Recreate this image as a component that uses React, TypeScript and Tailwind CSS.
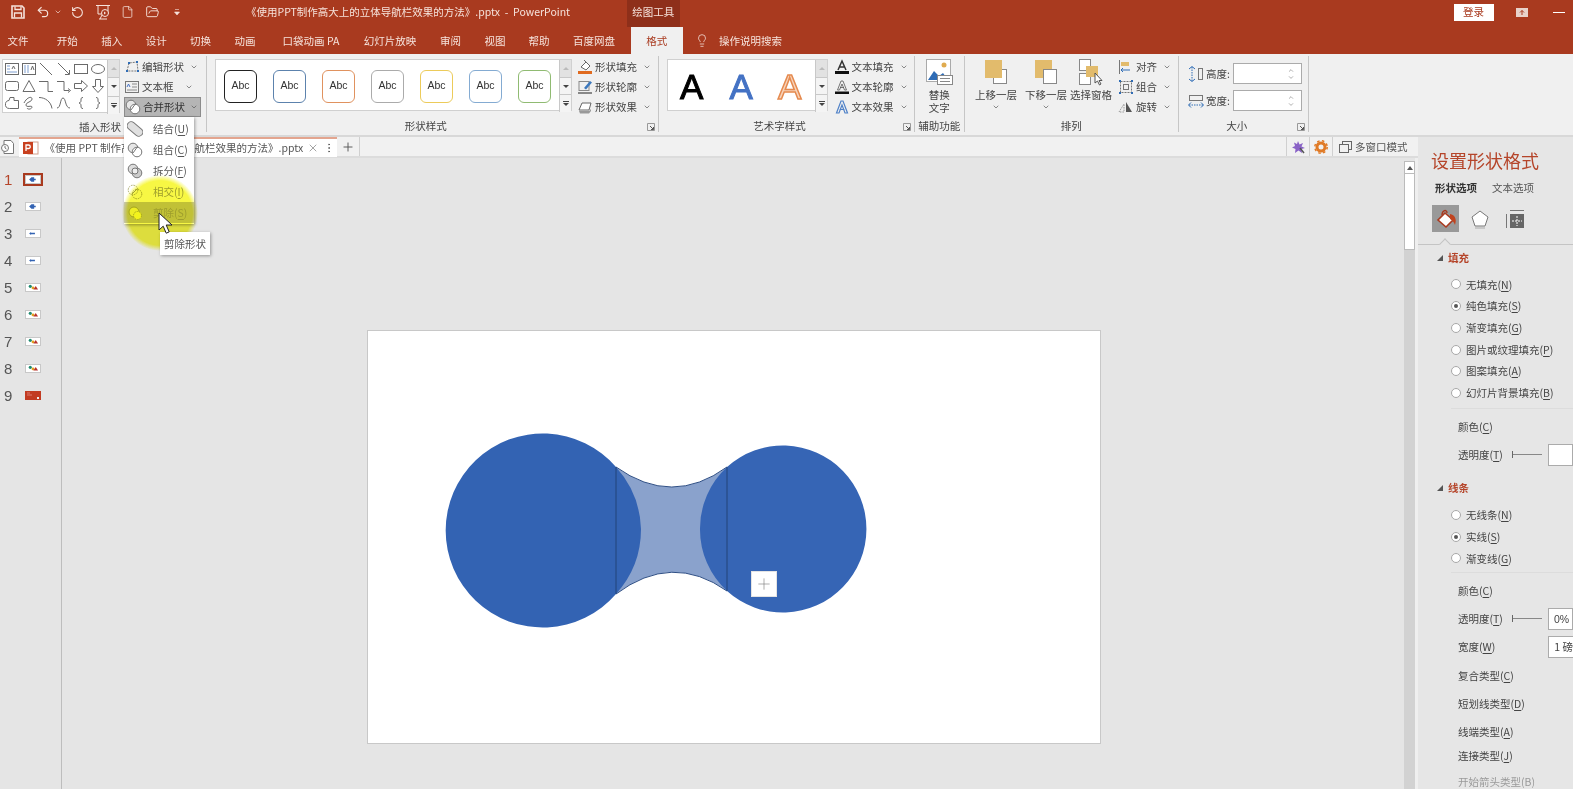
import { ReactNode } from "react";
import { ChevronDown, ChevronUp, FolderOpen, Lightbulb, MoreVertical, Plus, RotateCcw, Undo2, X, File } from "lucide-react";

const font = "font-['Noto_Sans_CJK_SC','Noto_Sans',sans-serif]";

// small chevron used next to ribbon buttons
function Chev({ className = "" }: { className?: string }) {
  return <ChevronDown className={`w-[8px] h-[8px] text-[#555] shrink-0 ${className}`} strokeWidth={2} />;
}

function Acc({ label, k }: { label: string; k: string }) {
  return (
    <span>
      {label}(<span className="underline underline-offset-2">{k}</span>)
    </span>
  );
}

function Svg({ children, w = 16, h = 16, className = "" }: { children: ReactNode; w?: number; h?: number; className?: string }) {
  return (
    <svg width={w} height={h} viewBox={`0 0 ${w} ${h}`} fill="none" className={`shrink-0 ${className}`}>
      {children}
    </svg>
  );
}

const gal = "#6a6a6a";
const galleryIcons: ReactNode[] = [
  <><rect x="1.5" y="2.5" width="13" height="11" stroke={gal} /><path d="M3 5h3M3 8h3M3 11h10" stroke="#7f9fd0" /><path d="M8 8l1.500-3 1.500 3" stroke={gal} /></>,
  <><rect x="1.5" y="2.5" width="13" height="11" stroke={gal} /><path d="M4 4v8M7 4v8" stroke="#7f9fd0" /><path d="M10 9l1.500-4 1.500 4" stroke={gal} /></>,
  <path d="M2 2l12 12" stroke={gal} />,
  <><path d="M2 2l11 11" stroke={gal} /><path d="M13.5 9v4.5H9" stroke={gal} /></>,
  <rect x="1.5" y="3.5" width="13" height="9" stroke={gal} />,
  <ellipse cx="8" cy="8" rx="6.5" ry="4.5" stroke={gal} />,
  <rect x="1.5" y="3.5" width="13" height="9" rx="2" stroke={gal} />,
  <path d="M8 2.5l6 11H2z" stroke={gal} />,
  <path d="M1 13.5h5v-10h9" stroke={gal} transform="matrix(-1 0 0 1 16 0)" />,
  <><path d="M1 3.5h7v9h5" stroke={gal} /><path d="M12 10.5l2.5 2-2.500 2" stroke={gal} /></>,
  <path d="M1.5 5.5h7v-3l6 5.5-6 5.500v-3h-7z" stroke={gal} />,
  <path d="M5.5 1.5v7h-3l5.5 6 5.500-6h-3v-7z" stroke={gal} />,
  <path d="M6 2.5h4v3h4.500v8h-9c-3 0-4.500-2-4-5 .3-2 2-3 3.500-3z" stroke={gal} />,
  <path d="M3 8c3-6 8-7 8-4s-6 3-6 6 6 0 6 2-4 3-5 1" stroke={gal} />,
  <path d="M1 2.500c6 0 12 4 13 11" stroke={gal} />,
  <path d="M1 13c4 0 3-10 6-10s2 10 7 10" stroke={gal} />,
  <path d="M10 2.500c-2 0-2 1-2 2.500s0 2.500-2 3c2 .5 2 1.500 2 3s0 2.500 2 2.500" stroke={gal} />,
  <path d="M6 2.500c2 0 2 1 2 2.500s0 2.500 2 3c-2 .5-2 1.500-2 3s0 2.500-2 2.500" stroke={gal} />,
];

function ScrollCol({ h }: { h: "a" | "b" }) {
  return (
    <div className={`w-[12px] shrink-0 flex flex-col border-l border-[#c8c8c8] bg-[#f4f4f4] ${h === "a" ? "h-[54px]" : "h-[52px]"}`}>
      <div className="flex-1 flex items-center justify-center bg-[#e2e2e2]">
        <span className="w-0 h-0 border-x-[3px] border-x-transparent border-b-[3px] border-b-[#bbb]" />
      </div>
      <div className="flex-1 flex items-center justify-center border-y border-[#c8c8c8]">
        <span className="w-0 h-0 border-x-[3px] border-x-transparent border-t-[3px] border-t-[#444]" />
      </div>
      <div className="flex-1 flex flex-col items-center justify-center gap-[1px]">
        <span className="w-[6px] h-px bg-[#444]" />
        <span className="w-0 h-0 border-x-[3px] border-x-transparent border-t-[3px] border-t-[#444]" />
      </div>
    </div>
  );
}

function Launcher() {
  return (
    <svg width="8" height="8" viewBox="0 0 8 8" fill="none" className="absolute right-[3px] bottom-[1px]">
      <path d="M.5 7.500v-7h7v7z" stroke="#999" />
      <path d="M3 3l3.500 3.500M6.500 4v2.500H4" stroke="#555" />
    </svg>
  );
}

function Group({ w, label, children, launcher }: { w: string; label: string; children: ReactNode; launcher?: boolean }) {
  return (
    <div className={`${w} shrink-0 h-[76px] flex flex-col border-r border-[#c6c6c6]`}>
      <div className="h-[63px] flex">{children}</div>
      <div className={`relative h-[13px] pt-[1px] flex items-center justify-center text-[10.5px] leading-none text-[#444] ${launcher ? "pr-[13px]" : ""}`}>
        {label}
        {launcher && <Launcher />}
      </div>
    </div>
  );
}

function ListBtn({ icon, label, chevGap = "ml-[4px]" }: { icon: ReactNode; label: string; chevGap?: string }) {
  return (
    <div className="h-[20px] flex items-center gap-[2px] text-[10.5px] text-[#444] whitespace-nowrap">
      {icon}
      <span>{label}</span>
      <Chev className={chevGap} />
    </div>
  );
}

function TwoCircles({ mode }: { mode: "union" | "combine" | "frag" | "inter" | "sub" }) {
  const c = mode === "inter" || mode === "sub" ? "#a8a86a" : "#777";
  return (
    <Svg w={16} h={16}>
      {mode === "union" && <rect x="-1" y="4" width="18" height="8" rx="4" transform="rotate(40 8 8)" fill="#e0e0e0" stroke={c} />}
      {mode === "combine" && <><circle cx="6" cy="6" r="4.800" fill="#e6e6e6" stroke={c} /><circle cx="10" cy="10" r="4.800" fill="#fff" stroke={c} /><path d="M6 11l5-7" stroke={c} /></>}
      {mode === "frag" && <><circle cx="6" cy="6" r="4.800" fill="#ddd" stroke={c} /><circle cx="10" cy="10" r="4.800" fill="#ccc" stroke={c} /><circle cx="8" cy="8" r="3" fill="#eee" stroke={c} /></>}
      {mode === "inter" && <><circle cx="6" cy="6" r="4.800" stroke={c} strokeDasharray="1.500 1" /><circle cx="10" cy="10" r="4.800" stroke={c} strokeDasharray="1.500 1" /><path d="M5 10l5-5" stroke={c} /></>}
      {mode === "sub" && <><circle cx="7" cy="7" r="5" fill="#f6f68a" stroke={c} /><circle cx="10.500" cy="10.500" r="4" fill="#fbfb66" stroke={c} strokeDasharray="1.500 1" /></>}
    </Svg>
  );
}

function MenuItem({ mode, label, k, off, hot }: { mode: "union" | "combine" | "frag" | "inter" | "sub"; label: string; k: string; off?: boolean; hot?: boolean }) {
  return (
    <div className={`h-[21px] flex items-center gap-[10px] pl-[3px] text-[10.5px] ${off ? "text-[#a3a3a3]" : "text-[#555]"} ${hot ? "bg-[#c8c8c8]" : ""}`}>
      <TwoCircles mode={mode} />
      <Acc label={label} k={k} />
    </div>
  );
}

function BigBtn({ icon, lines, chev, w }: { icon: ReactNode; lines: string[]; chev?: boolean; w: string }) {
  return (
    <div className={`${w} shrink-0 flex flex-col items-center text-[10.5px] leading-[13px] text-[#444] whitespace-nowrap`}>
      <div className="h-[32px] flex items-center justify-center">{icon}</div>
      {lines.map((l) => (
        <span key={l}>{l}</span>
      ))}
      {chev && <Chev className="mt-[2px]" />}
    </div>
  );
}

function AbcBox({ color }: { color: string }) {
  return (
    <div className={`w-[33px] h-[33px] shrink-0 rounded-[6px] border-[1.5px] bg-white flex items-center justify-center text-[10.5px] text-[#333] font-['Liberation_Sans',sans-serif] ${color}`}>
      Abc
    </div>
  );
}

function SizeField({ icon, label }: { icon: ReactNode; label: string }) {
  return (
    <div className="h-[21px] flex items-center">
      {icon}
      <span className="ml-[2px] w-[27px] text-[10.5px] text-[#444] whitespace-nowrap">{label}</span>
      <div className="w-[69px] h-[21px] bg-white border border-[#ababab] flex flex-col items-end justify-center pr-[6px]">
        <ChevronUp className="w-[8px] h-[7px] text-[#777]" />
        <ChevronDown className="w-[8px] h-[7px] text-[#777]" />
      </div>
    </div>
  );
}

function Ribbon() {
  return (
    <div className="h-[81px] bg-[#f0f0f0] flex pt-[2px]">
      <Group w="w-[207px]" label="">
        <div className="ml-[2px] mt-[3px] w-[118px] h-[54px] bg-white border border-[#d0d0d0] flex">
          <div className="flex-1 grid grid-cols-6 items-center justify-items-center">
            {galleryIcons.map((ic, i) => (
              <Svg key={i}>{ic}</Svg>
            ))}
          </div>
          <ScrollCol h="a" />
        </div>
        <div className="ml-[4px] pt-[1px] flex flex-col">
          <ListBtn
            label="编辑形状"
            icon={
              <Svg>
                <path d="M3 12L5 4l8-1 1 9z" stroke="#777" strokeDasharray="2 1" />
                <path d="M2 11h2v2H2zM4 3h2v2H4zM12 2h2v2h-2zM13 11h2v2h-2z" fill="#2f6cb5" />
              </Svg>
            }
          />
          <ListBtn
            label="文本框"
            chevGap="ml-[9px]"
            icon={
              <Svg>
                <rect x="1.500" y="2.500" width="13" height="11" stroke="#777" />
                <path d="M8 5h5M8 8h5M3 11h10" stroke="#8a8a8a" />
                <path d="M3 8l1.500-3L6 8" stroke="#4472c4" />
              </Svg>
            }
          />
          <div className="h-[20px] w-[77px] flex items-center gap-[2px] text-[10.5px] text-[#333] bg-[#b5b5b5] border border-[#8c8c8c]">
            <TwoCircles mode="combine" />
            <span>合并形状</span>
            <Chev className="ml-[3px]" />
          </div>
        </div>
      </Group>

      <Group w="w-[451.500px]" label="形状样式" launcher>
        <div className="ml-[8px] mt-[3px] w-[357px] h-[52px] bg-white border border-[#d0d0d0] flex">
          <div className="flex-1 flex items-center pl-[8px] pt-[2px] gap-[16px]">
            {["border-[#222]", "border-[#5c82ad]", "border-[#e0925f]", "border-[#ababab]", "border-[#eccb5a]", "border-[#84abd2]", "border-[#90bb72]"].map((c) => (
              <AbcBox key={c} color={c} />
            ))}
          </div>
          <ScrollCol h="b" />
        </div>
        <div className="ml-[5px] pt-[1px] flex flex-col">
          <ListBtn
            label="形状填充"
            icon={
              <Svg>
                <path d="M4 8l5-5 4 4-4 4z" fill="#fff" stroke="#666" />
                <path d="M7 1l2 2" stroke="#666" />
                <rect x="1" y="12" width="14" height="3" fill="#e06a1f" />
              </Svg>
            }
          />
          <ListBtn
            label="形状轮廓"
            icon={
              <Svg>
                <rect x="2" y="2.500" width="10" height="9" stroke="#888" />
                <path d="M7 9l6-7 2 1.500-6 7z" fill="#3c78bd" />
                <path d="M1 14h14" stroke="#888" strokeWidth="2" />
              </Svg>
            }
          />
          <ListBtn
            label="形状效果"
            icon={
              <Svg>
                <path d="M2 11l3-7h9l-2 7z" fill="#fff" stroke="#666" />
                <path d="M2 12h10l2-2v2l-2 2.500H3z" fill="#999" />
              </Svg>
            }
          />
        </div>
      </Group>

      <Group w="w-[256px]" label="艺术字样式" launcher>
        <div className="ml-[8.500px] mt-[3px] w-[161px] h-[52px] bg-white border border-[#d0d0d0] flex">
          <div className="flex-1 flex items-center pt-[2px] text-[35px] leading-none font-['Liberation_Sans',sans-serif]">
            <span className="w-[22px] ml-[12px] text-center text-black [-webkit-text-stroke:1px_#000]">A</span>
            <span className="w-[22px] ml-[27.500px] text-center text-[#4472c4] [-webkit-text-stroke:1px_#4472c4]">A</span>
            <span className="w-[22px] ml-[26.500px] text-center text-[#f7d4bb] [-webkit-text-stroke:1.500px_#e58a4f]">A</span>
          </div>
          <ScrollCol h="b" />
        </div>
        <div className="ml-[5.500px] pt-[1px] flex flex-col">
          <ListBtn
            label="文本填充"
            icon={
              <Svg>
                <path d="M4 11L8 2l4 9M5.500 8h5" stroke="#333" strokeWidth="1.500" />
                <rect x="1" y="12" width="14" height="3" fill="#111" />
              </Svg>
            }
          />
          <ListBtn
            label="文本轮廓"
            icon={
              <Svg>
                <path d="M3.500 11L7 2h2l3.500 9h-2L8 5l-2.500 6zM6 8.500h4" stroke="#555" strokeWidth=".8" />
                <rect x="1" y="12.500" width="14" height="2.500" fill="#111" />
              </Svg>
            }
          />
          <ListBtn
            label="文本效果"
            icon={
              <Svg>
                <path d="M2.500 14L7 2h2l4.500 12h-2.500L8 6l-3 8zM5.500 10.500h5" stroke="#4f81c7" strokeWidth="1.200" />
              </Svg>
            }
          />
        </div>
      </Group>

      <Group w="w-[50.500px]" label="辅助功能">
        <BigBtn
          w="w-full"
          lines={["替换", "文字"]}
          icon={
            <Svg w={27} h={27}>
              <rect x=".5" y=".5" width="24" height="22" fill="#fff" stroke="#aaa" />
              <circle cx="18" cy="6" r="2.500" fill="#e0ab4f" />
              <path d="M2 21l6-9 5 5 4-3 5 7z" fill="#2f6cb5" />
              <rect x="11.500" y="16.500" width="15" height="9" fill="#fff" stroke="#888" />
              <path d="M14 19.500h10M14 22.500h10" stroke="#888" />
            </Svg>
          }
        />
      </Group>

      <Group w="w-[213.500px]" label="排列">
        <div className="w-[6px] shrink-0" />
        <BigBtn
          w="w-[50px]"
          chev
          lines={["上移一层"]}
          icon={
            <Svg w={24} h={26}>
              <rect x="9.500" y="10.500" width="13" height="14" fill="#fff" stroke="#888" />
              <rect x="1" y="1" width="17" height="18" fill="#e2bb6c" />
            </Svg>
          }
        />
        <BigBtn
          w="w-[50px]"
          chev
          lines={["下移一层"]}
          icon={
            <Svg w={24} h={26}>
              <rect x="1" y="1" width="17" height="18" fill="#e2bb6c" />
              <rect x="9.500" y="10.500" width="13" height="14" fill="#fff" stroke="#888" />
            </Svg>
          }
        />
        <BigBtn
          w="w-[40px]"
          lines={["选择窗格"]}
          icon={
            <Svg w={26} h={28}>
              <rect x="1.500" y="1.500" width="11" height="11" fill="#fff" stroke="#888" />
              <rect x="1.500" y="15.500" width="11" height="11" fill="#fff" stroke="#888" />
              <rect x="8" y="8" width="12" height="11" fill="#e2bb6c" />
              <path d="M17 15v10l2.500-2 2 4 1.500-1-2-3.500h3z" fill="#fff" stroke="#555" />
            </Svg>
          }
        />
        <div className="ml-[7px] pt-[1px] flex flex-col">
          <ListBtn
            label="对齐"
            icon={
              <Svg>
                <path d="M1.500 1v14" stroke="#777" />
                <rect x="3" y="3" width="8" height="4" fill="#e2bb6c" />
                <path d="M3 11h9M5 9l-2 2 2 2" stroke="#2f6cb5" />
              </Svg>
            }
          />
          <ListBtn
            label="组合"
            icon={
              <Svg>
                <rect x="2.500" y="2.500" width="11" height="11" stroke="#777" strokeDasharray="2 1" />
                <path d="M1 1h2v2H1zM13 1h2v2h-2zM1 13h2v2H1zM13 13h2v2h-2z" fill="#2f6cb5" />
                <rect x="5.500" y="5.500" width="5" height="5" stroke="#777" />
              </Svg>
            }
          />
          <ListBtn
            label="旋转"
            icon={
              <Svg>
                <path d="M1 13l5-8v8z" stroke="#999" strokeDasharray="1.500 1" />
                <path d="M8 3l6 10H8z" fill="#555" />
              </Svg>
            }
          />
        </div>
      </Group>

      <Group w="w-[130.500px]" label="大小" launcher>
        <div className="ml-[9.500px] mt-[7px] flex flex-col gap-[6px]">
          <SizeField
            label="高度:"
            icon={
              <Svg>
                <path d="M4 1v14" stroke="#2f6cb5" strokeDasharray="1.500 1" />
                <path d="M1 3l3-2.500L7 3M1 13l3 2.500L7 13" stroke="#2f6cb5" />
                <rect x="10.500" y="2.500" width="4" height="11" stroke="#777" />
              </Svg>
            }
          />
          <SizeField
            label="宽度:"
            icon={
              <Svg>
                <rect x="1.500" y="2.500" width="13" height="5" stroke="#777" />
                <path d="M1 12h14" stroke="#2f6cb5" strokeDasharray="1.500 1" />
                <path d="M3 9.500L.5 12 3 14.500M13 9.500l2.500 2.500-2.500 2.500" stroke="#2f6cb5" />
              </Svg>
            }
          />
        </div>
      </Group>
    </div>
  );
}

const thumbs: ("blue" | "blue2" | "multi" | "red")[] = ["blue", "blue", "blue2", "blue2", "multi", "multi", "multi", "multi", "red"];

function Thumb({ kind }: { kind: "blue" | "blue2" | "multi" | "red" }) {
  if (kind === "red")
    return (
      <svg width="16" height="9" viewBox="0 0 16 9" className="block bg-[#c23b22]">
        <path d="M2 2h3M2 4h5" stroke="#eaa" strokeWidth=".6" />
        <rect x="12" y="6" width="2" height="2" fill="#eee" />
      </svg>
    );
  return (
    <svg width="16" height="9" viewBox="0 0 16 9" className="bg-white border border-[#c8c8c8] block">
      {kind === "blue" && <path d="M3 4.500L6 1.500h3.500v2h2v2h-2v2H6z" fill="#3363b3" />}
      {kind === "blue2" && <path d="M3 4.500L5.500 2.500v1h5v2h-5v1z" fill="#3363b3" />}
      {kind === "multi" && (
        <>
          <circle cx="4.500" cy="3" r="2" fill="#1f8a70" />
          <circle cx="8" cy="5" r="1.800" fill="#e0a020" />
          <path d="M8.500 7l3-4.500 3 4.500z" fill="#b8322a" />
        </>
      )}
    </svg>
  );
}

function SlideList() {
  return (
    <div className="w-[62px] shrink-0 border-r border-[#bdbdbd] pt-[8px] flex flex-col">
      {thumbs.map((k, i) => (
        <div key={i} className="h-[27px] flex items-center">
          <span className={`w-[23px] pl-[4px] text-[15px] leading-none font-['Liberation_Sans',sans-serif] ${i === 0 ? "text-[#b5452a]" : "text-[#555]"}`}>{i + 1}</span>
          {i === 0 ? (
            <div className="border-[2.500px] border-[#a93a1f] -ml-[0.500px]">
              <Thumb kind={k} />
            </div>
          ) : (
            <div className="ml-[2px]">
              <Thumb kind={k} />
            </div>
          )}
        </div>
      ))}
    </div>
  );
}

function Slide() {
  return (
    <div className="relative w-[734px] h-[414px] bg-white border border-[#c8c8c8]">
      <svg width="732" height="412" viewBox="368 332 732 412" className="block">
        <path d="M616 468Q672 508 727 468V592Q672 553 616 595Z" fill="#8aa2cc" />
        <path d="M616 468Q672 508 727 468M616 595Q672 553 727 592" stroke="#2f4f85" strokeWidth="1" fill="none" />
        <path d="M616 468A97 97 0 1 0 616 595A97 97 0 0 0 641 530A97 97 0 0 0 616 468Z" fill="#3363b3" />
        <path d="M727 468A83.500 83.500 0 1 1 727 592A83.500 83.500 0 0 1 700 530A83.500 83.500 0 0 1 727 468Z" fill="#3665b5" />
        <path d="M616 468V595M727 468V592" stroke="#234478" strokeWidth="1" />
      </svg>
      <div className="absolute left-[383px] top-[240px] w-[26px] h-[26px] bg-white border border-[#e4e4e4] flex items-center justify-center">
        <Plus className="w-[18px] h-[18px] text-[#777]" strokeWidth={0.8} />
      </div>
    </div>
  );
}

function Radio({ on, children }: { on?: boolean; children: ReactNode }) {
  return (
    <div className="h-[21.700px] flex items-center text-[10.5px] text-[#444] whitespace-nowrap">
      <span className="ml-[33px] w-[10px] h-[10px] rounded-full bg-white border border-[#a8a8a8] flex items-center justify-center shrink-0">
        {on && <span className="w-[4px] h-[4px] rounded-full bg-[#555]" />}
      </span>
      <span className="ml-[5px]">{children}</span>
    </div>
  );
}

function PaneRow({ mt, children }: { mt: string; children: ReactNode }) {
  return <div className={`${mt} h-[22px] pl-[40px] flex items-center text-[10.5px] whitespace-nowrap text-[#444]`}>{children}</div>;
}

function Section({ mt, label }: { mt: string; label: string }) {
  return (
    <div className={`${mt} h-[20px] flex items-center`}>
      <span className="ml-[19px] w-0 h-0 border-l-[6px] border-l-transparent border-b-[6px] border-b-[#555]" />
      <span className="ml-[5px] text-[10.5px] font-bold text-[#b5452a]">{label}</span>
    </div>
  );
}

function Slider() {
  return (
    <span className="ml-[9px] flex items-center">
      <span className="w-px h-[7px] bg-[#666]" />
      <span className="w-[29px] h-px bg-[#888]" />
    </span>
  );
}

function Pane() {
  return (
    <div className="w-[155px] shrink-0 bg-[#e6e6e6] overflow-hidden whitespace-nowrap">
      <div className="mt-[10px] pl-[13px] h-[26px] flex items-center text-[18px] text-[#b5452a]">设置形状格式</div>
      <div className="mt-[7px] pl-[17px] h-[16px] flex items-center gap-[15px] text-[10.5px]">
        <span className="font-bold text-[#333]">形状选项</span>
        <span className="text-[#555]">文本选项</span>
      </div>
      <div className="mt-[9px] pl-[14px] h-[27px] flex items-center">
        <div className="w-[27px] h-[27px] bg-[#999] flex items-center justify-center">
          <Svg w={22} h={22}>
            <path d="M10 5l8 7-7 7-8-7z" fill="#fff" stroke="#a93a1f" strokeWidth="1.600" />
            <path d="M7 7c0-5 5-6 5-2" stroke="#a93a1f" strokeWidth="1.400" />
            <path d="M15 6c5 1 7 5 5 11-1-3-3-5-5-6z" fill="#c0431f" />
          </Svg>
        </div>
        <Svg w={20} h={20} className="ml-[11px]">
          <path d="M10 2l8 6-3 9H5L2 8z" fill="#fff" stroke="#777" />
          <path d="M5 19h10" stroke="#aaa" />
        </Svg>
        <Svg w={20} h={20} className="ml-[15px]">
          <path d="M5 1.500h14M1.500 5v14" stroke="#777" />
          <rect x="5" y="5" width="14" height="14" fill="#666" />
          <path d="M12 7v10M7 12h10" stroke="#fff" strokeDasharray="2 1" />
        </Svg>
      </div>
      <div className="relative mt-[12px] h-px bg-[#c4c4c4]">
        <span className="absolute left-[23px] -top-[4px] w-[8px] h-[8px] rotate-45 bg-[#e6e6e6] border-l border-t border-[#c4c4c4]" />
      </div>

      <Section mt="mt-[3px]" label="填充" />
      <div className="mt-[5.600px]" />
      <Radio><Acc label="无填充" k="N" /></Radio>
      <Radio on><Acc label="纯色填充" k="S" /></Radio>
      <Radio><Acc label="渐变填充" k="G" /></Radio>
      <Radio><Acc label="图片或纹理填充" k="P" /></Radio>
      <Radio><Acc label="图案填充" k="A" /></Radio>
      <Radio><Acc label="幻灯片背景填充" k="B" /></Radio>
      <div className="ml-[33px] mt-[4px] h-px bg-[#dcdcdc]" />
      <PaneRow mt="mt-[7px]"><Acc label="颜色" k="C" /></PaneRow>
      <PaneRow mt="mt-[6px]">
        <Acc label="透明度" k="T" />
        <Slider />
        <span className="ml-[6px] w-[40px] h-[22px] bg-white border border-[#ababab]" />
      </PaneRow>

      <Section mt="mt-[12px]" label="线条" />
      <div className="mt-[6.500px]" />
      <Radio><Acc label="无线条" k="N" /></Radio>
      <Radio on><Acc label="实线" k="S" /></Radio>
      <Radio><Acc label="渐变线" k="G" /></Radio>
      <div className="ml-[33px] mt-[3px] h-px bg-[#dcdcdc]" />
      <PaneRow mt="mt-[7px]"><Acc label="颜色" k="C" /></PaneRow>
      <PaneRow mt="mt-[5.500px]">
        <Acc label="透明度" k="T" />
        <Slider />
        <span className="ml-[6px] w-[40px] h-[22px] bg-white border border-[#ababab] pl-[5px] leading-[20px] font-['Liberation_Sans',sans-serif]">0%</span>
      </PaneRow>
      <PaneRow mt="mt-[6.500px]">
        <Acc label="宽度" k="W" />
        <span className="ml-[53px] w-[40px] h-[22px] bg-white border border-[#ababab] pl-[5px] leading-[20px]">1 磅</span>
      </PaneRow>
      <PaneRow mt="mt-[6.500px]"><Acc label="复合类型" k="C" /></PaneRow>
      <PaneRow mt="mt-[6.500px]"><Acc label="短划线类型" k="D" /></PaneRow>
      <PaneRow mt="mt-[5.500px]"><Acc label="线端类型" k="A" /></PaneRow>
      <PaneRow mt="mt-[2.500px]"><Acc label="连接类型" k="J" /></PaneRow>
      <div className="mt-[10px] h-[10px] pl-[40px] flex items-center text-[10.5px] leading-[10px] text-[#9a9a9a]">开始箭头类型(B)</div>
    </div>
  );
}

function DocStrip() {
  return (
    <div className="h-[21px] shrink-0 bg-[#f1f1f1] border-b-2 border-[#dcdcdc] flex text-[10.5px] text-[#555]">
      <div className="w-[18.600px] flex items-center pl-[1px]">
        <Svg w={13} h={14}>
          <path d="M3 .5h7l2.500 3v10H3z" fill="#fff" stroke="#777" />
          <circle cx="4" cy="8" r="3.500" fill="#fff" stroke="#777" />
          <path d="M4 6v2l1.500 1" stroke="#777" />
        </Svg>
      </div>
      <div className="w-[318px] h-[20px] bg-white border-t-2 border-[#e3a58f] flex items-center">
        <Svg w={16} h={14} className="ml-[4px]">
          <rect x="5" y="1" width="10" height="12" fill="#fff" stroke="#d2a08e" />
          <rect x="0" y="1" width="10" height="12" fill="#c8401f" />
          <path d="M3 10V4h2.500a1.500 1.500 0 010 3.500H3" stroke="#fff" strokeWidth="1.300" />
        </Svg>
        <span className="ml-[6px] w-[258px] whitespace-nowrap">《使用 PPT 制作高大上的立体导航栏效果的方法》.pptx</span>
        <X className="ml-[4px] w-[12px] h-[12px] text-[#666]" strokeWidth={1.2} />
        <MoreVertical className="ml-[4px] w-[12px] h-[12px] text-[#555]" strokeWidth={1.6} />
      </div>
      <div className="w-[23.600px] border-r border-[#d0d0d0] flex items-center justify-center">
        <Plus className="w-[14px] h-[14px] text-[#555]" strokeWidth={1.6} />
      </div>
      <div className="flex-1" />
      <div className="w-[23px] border-l border-[#d0d0d0] flex items-center justify-center">
        <Svg w={14} h={14}>
          <path d="M7 1l1.500 3.500L12 3l-1.500 3.500L14 8l-3.500 1L11 13 7.500 10.500 4 13l.5-4L1 7.500 4 6 3 2.500 6 4z" fill="#8a63c7" />
          <path d="M9 8l4 5" stroke="#555" strokeWidth="1.500" />
        </Svg>
      </div>
      <div className="w-[23px] border-l border-[#d0d0d0] flex items-center justify-center">
        <Svg w={14} h={14}>
          <circle cx="7" cy="7" r="4" stroke="#e07a26" strokeWidth="3" />
          <circle cx="7" cy="7" r="6.200" stroke="#e07a26" strokeWidth="1.500" strokeDasharray="2.500 2.400" />
        </Svg>
      </div>
      <div className="w-[86px] border-l border-[#d0d0d0] flex items-center pl-[6px] gap-[3px] whitespace-nowrap">
        <Svg w={13} h={12}>
          <rect x="3.500" y=".5" width="9" height="8" fill="#f1f1f1" stroke="#666" />
          <rect x=".5" y="3.500" width="9" height="8" fill="#f1f1f1" stroke="#666" />
        </Svg>
        <span>多窗口模式</span>
      </div>
    </div>
  );
}

const tabs = [
  ["文件", "w-[36px] mr-[9px]"],
  ["开始", "w-[44.500px]"],
  ["插入", "w-[44.500px]"],
  ["设计", "w-[44.500px]"],
  ["切换", "w-[44px]"],
  ["动画", "w-[45px]"],
  ["口袋动画 PA", "w-[87px]"],
  ["幻灯片放映", "w-[71px]"],
  ["审阅", "w-[50px]"],
  ["视图", "w-[39px]"],
  ["帮助", "w-[49px]"],
  ["百度网盘", "w-[61px] mr-[6px]"],
];

export default function App() {
  return (
    <div className={`relative w-[1573px] h-[789px] overflow-hidden bg-[#e5e5e5] flex flex-col blur-[0.35px] ${font}`}>
      {/* title bar */}
      <div className="h-[27px] shrink-0 bg-[#a93a1f] flex items-center pb-[3px] text-[10.5px] text-[#f6e3dc]">
        <Svg w={14} h={14} className="ml-[11px]">
          <path d="M1 1h10l2 2v10H1z" stroke="currentColor" strokeWidth="1.600" />
          <path d="M4 1.500v3h6v-3M3.500 12.500V8h7v4.500" stroke="currentColor" strokeWidth="1.300" />
        </Svg>
        <Undo2 className="ml-[11px] w-[14px] h-[14px]" strokeWidth={2} />
        <ChevronDown className="ml-[4px] w-[8px] h-[8px]" />
        <RotateCcw className="ml-[9px] w-[13px] h-[13px]" strokeWidth={2} />
        <Svg w={16} h={16} className="ml-[11px]">
          <path d="M1 1.500h14M3 2v8h10V2" stroke="currentColor" />
          <circle cx="10" cy="9" r="3.500" fill="#a93a1f" stroke="currentColor" />
          <path d="M9 7.500v3l2-1.500z" fill="currentColor" />
          <path d="M7 11l-2 4M4 15h8" stroke="currentColor" />
        </Svg>
        <File className="ml-[10px] w-[13px] h-[14px]" strokeWidth={1.4} />
        <FolderOpen className="ml-[11px] w-[15px] h-[14px]" strokeWidth={1.6} />
        <Svg w={6} h={8} className="ml-[14px]">
          <path d="M1 1.500h4M.5 4h5l-2.500 3z" fill="currentColor" stroke="currentColor" strokeWidth=".6" />
        </Svg>
        <span className="ml-[66px] w-[381px] whitespace-pre">《使用PPT制作高大上的立体导航栏效果的方法》.pptx  -  PowerPoint</span>
        <div className="self-start w-[52.500px] h-[27px] pb-[3px] bg-[#8e2f1a] flex items-center justify-center">绘图工具</div>
        <div className="ml-[774px] w-[40px] h-[17px] bg-white text-[#a93a1f] flex items-center justify-center">登录</div>
        <Svg w={12} h={9} className="ml-[22px]">
          <rect width="12" height="9" fill="#e8d2ca" />
          <path d="M6 7V2.500M4 4.500l2-2 2 2" stroke="#a93a1f" />
        </Svg>
        <div className="ml-[25px] w-[12px] h-px bg-white" />
      </div>

      {/* ribbon tabs */}
      <div className="h-[27px] shrink-0 bg-[#a93a1f] flex items-center text-[10.5px] text-[#f6e3dc]">
        {tabs.map(([t, c]) => (
          <div key={t} className={`${c} text-center whitespace-nowrap`}>
            {t}
          </div>
        ))}
        <div className="w-[52.500px] h-[27px] bg-[#f0f0f0] text-[#a93a1f] flex items-center justify-center">格式</div>
        <Lightbulb className="ml-[12px] w-[14px] h-[15px]" strokeWidth={1.3} />
        <span className="ml-[10px]">操作说明搜索</span>
      </div>

      <Ribbon />

      <div className="flex-1 min-h-0 flex border-t-2 border-[#d8d8d8]">
        <div className="w-[1418px] shrink-0 flex flex-col">
          <DocStrip />
          <div className="flex-1 min-h-0 flex">
            <SlideList />
            <div className="flex-1 flex justify-center pt-[172px] pl-[2px]">
              <Slide />
            </div>
            {/* scrollbar */}
            <div className="w-[14px] shrink-0 border-r-[3px] border-[#efefef] pt-[3px]">
              <div className="h-full bg-[#d2d2d2] flex flex-col">
                <div className="h-[13px] bg-white border border-[#bbb] flex items-center justify-center">
                  <span className="w-0 h-0 border-x-[3.500px] border-x-transparent border-b-[4px] border-b-[#555]" />
                </div>
                <div className="h-[76px] bg-white border-x border-b border-[#bbb]" />
              </div>
            </div>
          </div>
        </div>
        <Pane />
      </div>

      {/* merge shapes dropdown */}
      <div className="absolute left-[79px] top-[122px] text-[10.5px] leading-none text-[#444]">插入形状</div>
      <div className="absolute left-[124px] top-[117px] w-[70px] h-[107px] bg-white shadow-[1px_1px_3px_rgba(0,0,0,.35)] pt-[1px]">
        <MenuItem mode="union" label="结合" k="U" />
        <MenuItem mode="combine" label="组合" k="C" />
        <MenuItem mode="frag" label="拆分" k="F" />
        <MenuItem mode="inter" label="相交" k="I" off />
        <MenuItem mode="sub" label="剪除" k="S" off hot />
      </div>
      {/* cursor highlight */}
      <div className="absolute left-[122px] top-[175px] w-[76px] h-[76px] rounded-full mix-blend-multiply bg-[radial-gradient(circle_closest-side,#f7f744_0%,#f7f744_85%,#f7f74400_100%)]" />
      <div className="absolute left-[160px] top-[232px] w-[50px] h-[23px] bg-white shadow-[1px_1px_3px_rgba(0,0,0,.35)] flex items-center justify-center text-[10.5px] text-[#555] whitespace-nowrap">
        剪除形状
      </div>
      <svg width="16" height="24" viewBox="0 0 16 24" className="absolute left-[158px] top-[212px]">
        <path d="M1 1v17l4.200-3.800 3 7 3-1.300-3-6.900h5.800z" fill="#fff" stroke="#222" strokeWidth="1" />
      </svg>
    </div>
  );
}
